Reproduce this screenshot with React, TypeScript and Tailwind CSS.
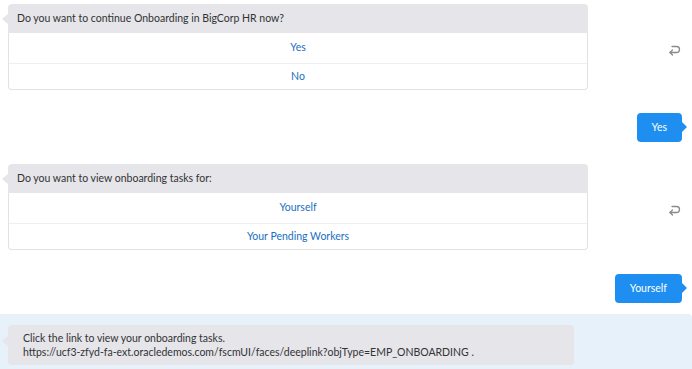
import React from 'react'

const font = { fontFamily: 'Lato, "Open Sans", Arial, sans-serif' }

function ReplyIcon() {
    return (
        <svg width="13" height="12" viewBox="0 0 13 12" fill="none" stroke="#8a8a8a" strokeWidth="1.3" strokeLinecap="round" strokeLinejoin="round">
            <path d="M4 1.5h4.5a3 3 0 0 1 0 6H2" />
            <path d="M4.5 5 2 7.5 4.5 10" />
        </svg>
    )
}

function BotQuestion({ question, options }: { question: string; options: string[] }) {
    return (
        <div className="flex items-center">
            <div className="relative ml-2 w-[580px]">
                <div className="absolute left-[-6px] top-[10px] h-0 w-0 border-y-[5px] border-r-[6px] border-y-transparent border-r-[#e5e5ea]" />
                <div className="flex h-[29px] items-center rounded-t-[4px] bg-[#e5e5ea] px-[9px] text-[10.5px] text-[#333]">
                    {question}
                </div>
                <div className="rounded-b-[4px] border border-t-0 border-[#e2e2e2] bg-white">
                    {options.map((o, i) => (
                        <div
                            key={o}
                            className={
                                'flex items-center justify-center text-[10.5px] text-[#1a6fbf] ' +
                                (i > 0 ? 'h-[26px] border-t border-[#efefef]' : 'h-[30px]')
                            }
                        >
                            {o}
                        </div>
                    ))}
                </div>
            </div>
            <div className="ml-[80px] mt-[8px]">
                <ReplyIcon />
            </div>
        </div>
    )
}

function UserReply({ text }: { text: string }) {
    return (
        <div className="flex justify-end pr-[10px]">
            <div className="relative flex h-[29px] items-center rounded-[4px] bg-[#1e8ff0] px-[15px] text-[10.5px] text-white">
                {text}
                <div className="absolute right-[-5px] top-[9px] h-0 w-0 border-y-[5px] border-l-[5px] border-y-transparent border-l-[#1e8ff0]" />
            </div>
        </div>
    )
}

export default function App() {
    return (
        <div className="h-[369px] w-[692px] overflow-hidden bg-white" style={font}>
            <div className="pt-[4px]">
                <BotQuestion question="Do you want to continue Onboarding in BigCorp HR now?" options={['Yes', 'No']} />
            </div>
            <div className="mt-[23px]">
                <UserReply text="Yes" />
            </div>
            <div className="mt-[22px]">
                <BotQuestion question="Do you want to view onboarding tasks for:" options={['Yourself', 'Your Pending Workers']} />
            </div>
            <div className="mt-[24px]">
                <UserReply text="Yourself" />
            </div>
            <div className="mt-[11px] h-[60px] rounded-tr-[4px] bg-[#e6f1fa] pt-[11px]">
                <div className="relative ml-2 w-[566px] rounded-[4px] bg-[#e5e5ea] px-[15px] py-[6px] text-[10.5px] leading-[14px] text-[#333]">
                    <div className="absolute left-[-6px] top-[11px] h-0 w-0 border-y-[5px] border-r-[6px] border-y-transparent border-r-[#e5e5ea]" />
                    <div>Click the link to view your onboarding tasks.</div>
                    <div>https://ucf3-zfyd-fa-ext.oracledemos.com/fscmUI/faces/deeplink?objType=EMP_ONBOARDING .</div>
                </div>
            </div>
        </div>
    )
}
